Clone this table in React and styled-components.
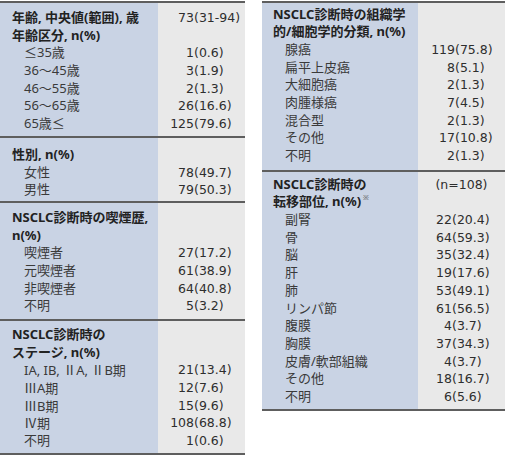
import React from 'react';
import styled, { createGlobalStyle } from 'styled-components';

const GlobalStyle = createGlobalStyle`
  html, body {
    margin: 0;
    padding: 0;
    background: #fff;
  }
`;

const LINE = 17.7;

const Page = styled.div`
  display: flex;
  align-items: flex-start;
  gap: 17px;
  padding-top: 1px;
  font-family: 'Noto Sans', 'Noto Sans CJK JP', sans-serif;
  font-size: 13px;
  color: #333;
`;

const Table = styled.div`
  width: ${({ $width }) => $width}px;
  border-top: 2px solid #5e5e5e;
  border-bottom: 2px solid #5e5e5e;
`;

const Section = styled.div`
  display: flex;

  & + & {
    border-top: 2px solid #5e5e5e;
  }
`;

const LabelCol = styled.div`
  width: ${({ $width }) => $width}px;
  flex-shrink: 0;
  box-sizing: border-box;
  background: #c9d3e4;
  padding: ${({ $pad }) => `${$pad[0]}px 0 ${$pad[1]}px ${$pad[2]}px`};
`;

const ValueCol = styled.div`
  flex: 1;
  background: #e9e9e9;
  padding: ${({ $pad }) => `${$pad[0]}px 0 ${$pad[1]}px 0`};
  font-family: 'DejaVu Sans', 'Noto Sans CJK JP', sans-serif;
  font-size: 12.5px;
  color: #2e2e2e;
`;

const Line = styled.div`
  height: ${LINE}px;
  line-height: ${LINE}px;
  white-space: nowrap;
  padding-left: ${({ $indent }) => ($indent ? 12 : 0)}px;
  font-weight: ${({ $header }) => ($header ? 700 : 400)};
  color: ${({ $header }) => ($header ? '#222' : '#3a3a3a')};
`;

const Roman = styled.span`
  font-family: 'Noto Sans CJK JP', sans-serif;
`;

const ValueLine = styled.div`
  height: ${LINE}px;
  line-height: ${LINE}px;
  white-space: nowrap;
  text-align: ${({ $center }) => ($center ? 'center' : 'left')};
`;

const Num = styled.span`
  display: inline-block;
  width: ${({ $width }) => $width}px;
  text-align: right;
`;

const Note = styled.sup`
  font-size: 7px;
  font-weight: 400;
  vertical-align: 6px;
  margin-left: 2px;
  line-height: 0;
  color: #555;
`;

const h = (label, value) => ({ label, header: true, value });
const i = (label, value) => ({ label, indent: true, value });

const leftTable = [
  {
    pad: [6, 3],
    rows: [
      h('年齢, 中央値(範囲), 歳', ['73', '(31-94)']),
      h('年齢区分, n(%)'),
      i('≤35歳', ['1', '(0.6)']),
      i('36～45歳', ['3', '(1.9)']),
      i('46～55歳', ['2', '(1.3)']),
      i('56～65歳', ['26', '(16.6)']),
      i('65歳≤', ['125', '(79.6)']),
    ],
  },
  {
    pad: [8, 2],
    rows: [
      h('性別, n(%)'),
      i('女性', ['78', '(49.7)']),
      i('男性', ['79', '(50.3)']),
    ],
  },
  {
    pad: [6, 4],
    rows: [
      h('NSCLC診断時の喫煙歴,'),
      h('n(%)'),
      i('喫煙者', ['27', '(17.2)']),
      i('元喫煙者', ['61', '(38.9)']),
      i('非喫煙者', ['64', '(40.8)']),
      i('不明', ['5', '(3.2)']),
    ],
  },
  {
    pad: [5, 3],
    rows: [
      h('NSCLC診断時の'),
      h('ステージ, n(%)'),
      i(
        <>
          IA, IB, <Roman>Ⅱ</Roman>A, <Roman>Ⅱ</Roman>B期
        </>,
        ['21', '(13.4)'],
      ),
      i(<><Roman>Ⅲ</Roman>A期</>, ['12', '(7.6)']),
      i(<><Roman>Ⅲ</Roman>B期</>, ['15', '(9.6)']),
      i(<><Roman>Ⅳ</Roman>期</>, ['108', '(68.8)']),
      i('不明', ['1', '(0.6)']),
    ],
  },
];

const rightTable = [
  {
    pad: [2.5, 5],
    num: 37,
    rows: [
      h('NSCLC診断時の組織学'),
      h('的/細胞学的分類, n(%)'),
      i('腺癌', ['119', '(75.8)']),
      i('扁平上皮癌', ['8', '(5.1)']),
      i('大細胞癌', ['2', '(1.3)']),
      i('肉腫様癌', ['7', '(4.5)']),
      i('混合型', ['2', '(1.3)']),
      i('その他', ['17', '(10.8)']),
      i('不明', ['2', '(1.3)']),
    ],
  },
  {
    pad: [4, 3],
    num: 34,
    rows: [
      h('NSCLC診断時の', '(n=108)'),
      { label: '転移部位, n(%)', header: true, note: '※' },
      i('副腎', ['22', '(20.4)']),
      i('骨', ['64', '(59.3)']),
      i('脳', ['35', '(32.4)']),
      i('肝', ['19', '(17.6)']),
      i('肺', ['53', '(49.1)']),
      i('リンパ節', ['61', '(56.5)']),
      i('腹膜', ['4', '(3.7)']),
      i('胸膜', ['37', '(34.3)']),
      i('皮膚/軟部組織', ['4', '(3.7)']),
      i('その他', ['18', '(16.7)']),
      i('不明', ['6', '(5.6)']),
    ],
  },
];

const DataTable = ({ sections, width, labelWidth, labelPad, numWidth }) => (
  <Table $width={width}>
    {sections.map((section, si) => (
      <Section key={si}>
        <LabelCol $width={labelWidth} $pad={[...section.pad, labelPad]}>
          {section.rows.map((row, ri) => (
            <Line key={ri} $header={row.header} $indent={row.indent}>
              {row.label}
              {row.note && <Note>{row.note}</Note>}
            </Line>
          ))}
        </LabelCol>
        <ValueCol $pad={section.pad}>
          {section.rows.map((row, ri) => {
            if (!row.value) return <ValueLine key={ri} />;
            if (typeof row.value === 'string') {
              return (
                <ValueLine key={ri} $center>
                  {row.value}
                </ValueLine>
              );
            }
            return (
              <ValueLine key={ri}>
                <Num $width={section.num || numWidth}>{row.value[0]}</Num>
                {row.value[1]}
              </ValueLine>
            );
          })}
        </ValueCol>
      </Section>
    ))}
  </Table>
);

export default function App() {
  return (
    <>
      <GlobalStyle />
      <Page>
        <DataTable sections={leftTable} width={245} labelWidth={158} labelPad={12} numWidth={36} />
        <DataTable sections={rightTable} width={243} labelWidth={156} labelPad={11} numWidth={37} />
      </Page>
    </>
  );
}
